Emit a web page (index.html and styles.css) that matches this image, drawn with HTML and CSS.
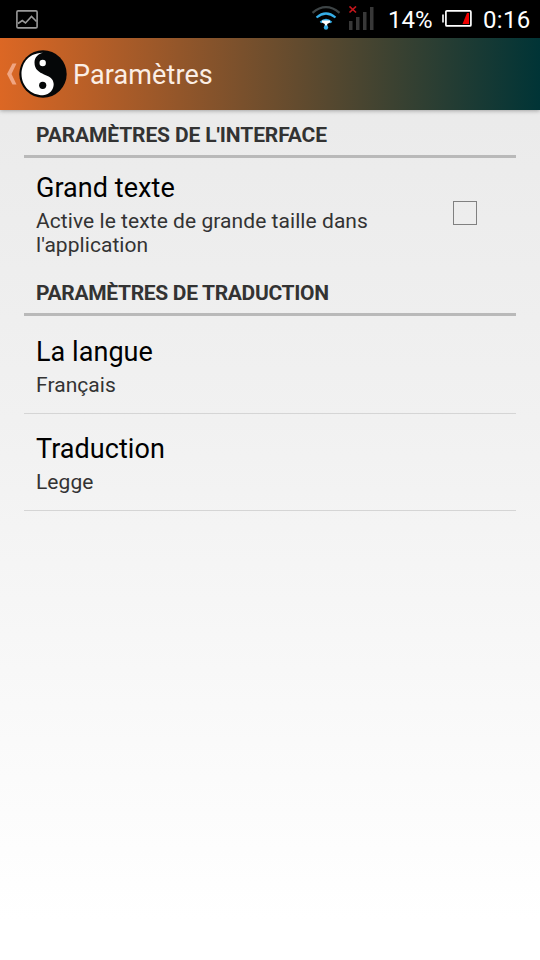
FILE: index.html
```
<!DOCTYPE html>
<html lang="fr">
<head>
    <meta charset="utf-8" />
    <meta name="viewport" content="width=device-width, initial-scale=1.0" />
    <title>Paramètres</title>
    <link rel="stylesheet" href="styles.css">
</head>
<body>
    <div class="status-bar">
        <svg class="icon-picture" width="22" height="19" viewBox="0 0 22 19" fill="none" stroke="#999" stroke-width="1.6">
            <rect x="0.9" y="0.9" width="20.2" height="17" rx="1.2" />
            <path d="M2 13.5L6.3 10.5L9.5 13L15.5 6.5L20.5 11.5" />
        </svg>
        <svg class="icon-wifi" width="30" height="26" viewBox="0 0 30 26" fill="none" stroke-width="2.2">
            <path d="M1.5 6.8Q15 -4.5 28.5 6.8" stroke="#3d4446" />
            <path d="M5.5 11.5Q15 3.5 24.5 11.5" stroke="#35aee8" />
            <path d="M9.5 16.5Q15 11.5 20.5 16.5" stroke="#35aee8" />
            <path d="M11 14.5H19V16.5L16.2 18V20H13.8V18L11 16.5Z" fill="#fff" />
            <circle cx="15" cy="21.5" r="2.2" fill="#35aee8" />
        </svg>
        <svg class="icon-signal" width="26" height="26" viewBox="0 0 26 26">
            <path d="M1 15h3.5v9H1zM8 11h3.5V24H8zM15 6h3.5V24H15zM22 1h3.5v23H22z" fill="#383838" />
            <path d="M1.5 0.5L8 6.5M8 0.5L1.5 6.5" stroke="#c3161c" stroke-width="1.7" />
        </svg>
        <span class="battery-level">14%</span>
        <svg class="icon-battery" width="30" height="18" viewBox="0 0 30 18">
            <rect x="3.9" y="0.9" width="25" height="15" rx="1" fill="none" stroke="#fff" stroke-width="1.7" />
            <path d="M1 4.5v8" stroke="#fff" stroke-width="1.6" />
            <path d="M20.5 14L25 3H27V14Z" fill="#f00000" />
        </svg>
        <span class="clock">0:16</span>
    </div>

    <div class="action-bar">
        <svg class="icon-back" width="12" height="24" viewBox="0 0 12 24">
            <path d="M6.5 1.5H10.5L5.5 12L10.5 22.5H6.5L1 12Z" fill="#f0a582" />
        </svg>
        <svg class="app-logo" width="48" height="48" viewBox="0 0 48 48">
            <circle cx="24" cy="24" r="23.7" fill="#050708" />
            <path d="M24 2.7C7 3 2.5 16 2.5 24C2.500 36 12 45.300 24 45.300C31 44.500 34.700 39.500 34.700 34C34.700 22.500 15.500 27 15.500 12.500C15.500 7.500 19 3.800 24 2.700Z" fill="#fff" />
            <circle cx="23.7" cy="13" r="3.2" fill="#fff" />
            <circle cx="23.7" cy="35.3" r="3.6" fill="#050708" />
        </svg>
        <h1 class="action-title">Paramètres</h1>
    </div>

    <div class="settings">
        <h2 class="category">PARAMÈTRES DE L'INTERFACE</h2>
        <div class="preference preference-check">
            <div class="preference-text">
                <div class="preference-title">Grand texte</div>
                <div class="preference-summary">Active le texte de grande taille dans l'application</div>
            </div>
            <div class="checkbox"></div>
        </div>

        <h2 class="category category-translation">PARAMÈTRES DE TRADUCTION</h2>
        <div class="preference preference-list">
            <div class="preference-title">La langue</div>
            <div class="preference-summary">Français</div>
        </div>
        <div class="preference preference-list">
            <div class="preference-title">Traduction</div>
            <div class="preference-summary">Legge</div>
        </div>
    </div>
</body>
</html>
```

FILE: styles.css
```
* {
    box-sizing: border-box;
}

body {
    margin: 0;
    height: 960px;
    font-family: Roboto, sans-serif;
    background: linear-gradient(#e8e8e8 0, #ebebeb 120px, #f1f1f1 420px, #fff 920px);
    overflow: hidden;
}

svg {
    display: block;
    flex: none;
}

.status-bar {
    display: flex;
    align-items: center;
    height: 38px;
    padding: 0 9px 0 16px;
    background-color: #000;
    color: #fff;
    font-size: 24px;
    line-height: 38px;
}

.status-bar span {
    padding-top: 1px;
}

.icon-wifi {
    margin-left: auto;
    margin-right: 7px;
}

.icon-signal {
    margin-right: 14px;
}

.battery-level {
    width: 46px;
    margin-right: 8px;
}

.icon-battery {
    margin-right: 11px;
}

.clock {
    width: 48px;
    letter-spacing: 0.3px;
}

.action-bar {
    display: flex;
    align-items: center;
    height: 72px;
    padding-left: 6px;
    background: linear-gradient(to right, #dc6724, #003436);
    box-shadow: 0 1px 4px rgba(0, 0, 0, 0.3);
}

.app-logo {
    margin-left: 1px;
}

.action-title {
    margin: 2px 0 0 6px;
    color: #fbeee5;
    font-size: 27px;
    font-weight: 400;
    letter-spacing: 0.1px;
}

.settings {
    padding: 0 24px;
}

.category {
    height: 48px;
    margin: 0;
    padding: 13px 12px 0;
    border-bottom: 3px solid #b9b9b9;
    color: #333;
    font-size: 21px;
    font-weight: 700;
    line-height: 25px;
    letter-spacing: -0.12px;
}

.category-translation {
    letter-spacing: -0.32px;
}

.preference {
    padding: 0 12px;
}

.preference-check {
    display: flex;
    align-items: center;
    height: 110px;
    padding-right: 39px;
}

.preference-text {
    width: 350px;
    padding-top: 2px;
}

.preference-list {
    height: 97px;
    padding-top: 19px;
    border-bottom: 1px solid #d5d5d5;
}

/* first row after the header is slightly taller */
.category-translation + .preference-list {
    height: 98px;
    padding-top: 20px;
}

.preference-title {
    color: #000;
    font-size: 27px;
    line-height: 33px;
    letter-spacing: 0.05px;
}

.preference-summary {
    padding-top: 4px;
    color: #333;
    font-size: 21px;
    line-height: 24px;
    letter-spacing: 0.06px;
}

.checkbox {
    width: 24px;
    height: 24px;
    margin-left: auto;
    border: 1px solid #808080;
}
```
